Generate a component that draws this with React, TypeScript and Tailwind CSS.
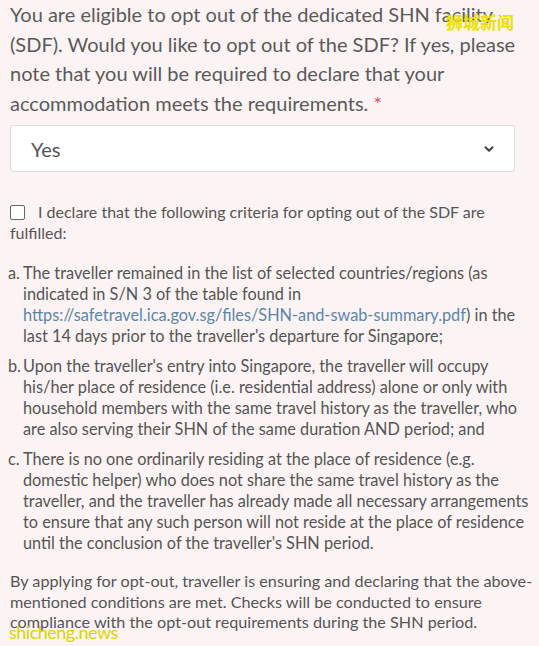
import { ChevronDown } from 'lucide-react'

// lines are broken by hand to follow the source form's wrapping
const items = [
  {
    key: 'a.',
    lines: [
      'The traveller remained in the list of selected countries/regions (as',
      'indicated in S/N 3 of the table found in',
      <>
        <a className="text-[#5b86a8]" href="#">
          https://safetravel.ica.gov.sg/files/SHN-and-swab-summary.pdf
        </a>
        ) in the
      </>,
      "last 14 days prior to the traveller's departure for Singapore;",
    ],
  },
  {
    key: 'b.',
    lines: [
      "Upon the traveller's entry into Singapore, the traveller will occupy",
      'his/her place of residence (i.e. residential address) alone or only with',
      'household members with the same travel history as the traveller, who',
      'are also serving their SHN of the same duration AND period; and',
    ],
  },
  {
    key: 'c.',
    lines: [
      'There is no one ordinarily residing at the place of residence (e.g.',
      'domestic helper) who does not share the same travel history as the',
      'traveller, and the traveller has already made all necessary arrangements',
      'to ensure that any such person will not reside at the place of residence',
      "until the conclusion of the traveller's SHN period.",
    ],
  },
]

export default function App() {
  return (
    <div className="relative h-[646px] w-[539px] overflow-hidden bg-[#fcf4f4] font-['Lato','Open_Sans',sans-serif] text-[#555]">
      <div className="pl-[10px]">
        <p className="whitespace-nowrap text-[20px] leading-[29.5px] text-[#5a5a5a]">
          You are eligible to opt out of the dedicated SHN facility
          <br />
          (SDF). Would you like to opt out of the SDF? If yes, please
          <br />
          note that you will be required to declare that your
          <br />
          accommodation meets the requirements.{' '}
          <span className="text-[#e0525a]">*</span>
        </p>

        <div className="mt-[7px] flex h-[47px] w-[505px] items-center justify-between rounded-[3px] border border-[#dcdcdc] bg-white pl-[20px] pr-[18px]">
          <span className="text-[20px] text-[#555]">Yes</span>
          <ChevronDown className="size-[14px] text-[#444]" strokeWidth={3.5} />
        </div>

        <label className="mt-[30px] block whitespace-nowrap text-[16px] leading-[20.5px]">
          <span className="mr-[13px] inline-block size-[15px] translate-y-[2px] rounded-[2px] border border-[#666] bg-white" />
          I declare that the following criteria for opting out of the SDF are
          <br />
          fulfilled:
        </label>

        <ol className="-ml-[2px] mt-[19px] flex flex-col gap-[9px] whitespace-nowrap text-[16.3px] leading-[21px]">
          {items.map((it) => (
            <li key={it.key} className="flex">
              <span className="w-[15px] shrink-0">{it.key}</span>
              <span>
                {it.lines.map((l, i) => (
                  <span key={i} className="block">
                    {l}
                  </span>
                ))}
              </span>
            </li>
          ))}
        </ol>

        <p className="mt-[18px] whitespace-nowrap text-[16.2px] leading-[20.5px]">
          By applying for opt-out, traveller is ensuring and declaring that the above-
          <br />
          mentioned conditions are met. Checks will be conducted to ensure
          <br />
          compliance with the opt-out requirements during the SHN period.
        </p>
      </div>

      <span className="absolute right-[25px] top-[9px] font-['Noto_Sans_CJK_SC',sans-serif] text-[17px] font-bold text-[#eee000]">
        狮城新闻
      </span>
      <span className="absolute bottom-[5px] left-[9px] text-[18px] leading-none tracking-[-0.5px] text-[#dcd400]">
        shicheng.news
      </span>
    </div>
  )
}
